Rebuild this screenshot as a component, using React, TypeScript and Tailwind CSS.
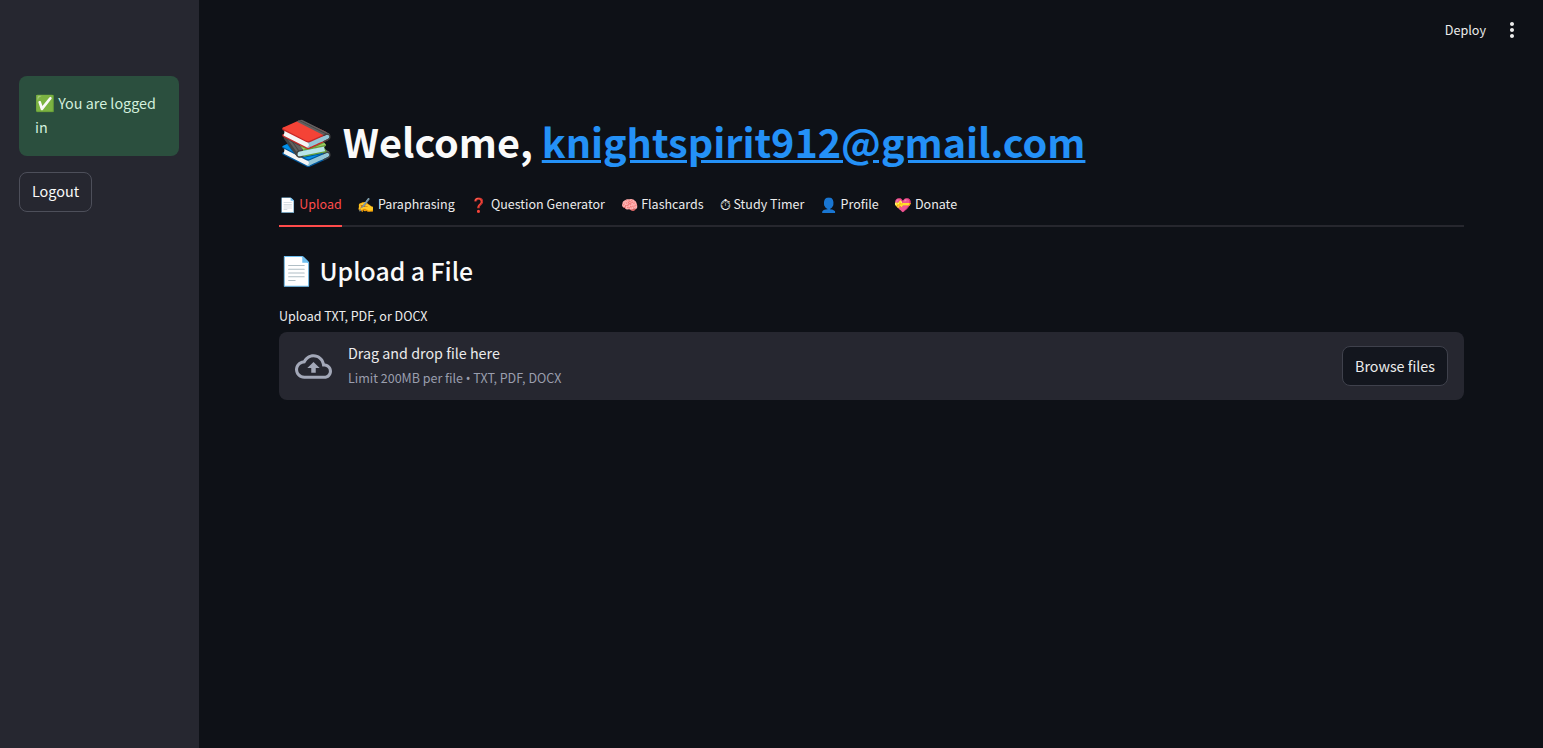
const tabs = [
  ["📄", "Upload"],
  ["✍️", "Paraphrasing"],
  ["❓", "Question Generator"],
  ["🧠", "Flashcards"],
  ["⏱\uFE0E", "Study Timer"],
  ["👤", "Profile"],
  ["💝", "Donate"],
];

export default function App() {
  return (
    <div className="flex h-[748px] overflow-hidden bg-[#0e1117] text-[#fafafa] font-['Noto_Sans_CJK_SC','DejaVu_Sans','Noto_Color_Emoji',sans-serif]">
      <aside className="w-[199px] shrink-0 bg-[#262730] pl-[19px] pr-[20px] pt-[76px]">
        <div className="h-[80px] rounded-lg bg-[#2b4f3e] px-4 pt-[14px] text-[14.35px] leading-6 text-[#d3f0dd]">
          <span className="text-base">✅</span> You are logged in
        </div>
        <button className="mt-4 h-10 w-[73px] rounded-lg border border-[#4d4f5a] pb-[2px] text-[14.4px] text-[#fafafa]">Logout</button>
      </aside>
      <main className="flex min-w-0 flex-1 flex-col">
        <header className="flex h-[60px] items-center justify-end pr-[19px] text-[12.6px] text-[#ececec]">
          <span>Deploy</span>
          <svg className="ml-[14px]" width="24" height="24" viewBox="0 0 24 24" fill="currentColor">
            <path d="M12 8c1.1 0 2-.9 2-2s-.9-2-2-2-2 .9-2 2 .9 2 2 2zm0 2c-1.1 0-2 .9-2 2s.9 2 2 2 2-.9 2-2-.9-2-2-2zm0 6c-1.1 0-2 .9-2 2s.9 2 2 2 2-.9 2-2-.9-2-2-2z" />
          </svg>
        </header>
        <div className="ml-[80px] mr-[79px] pt-[53px]">
          <h1 className="text-[39.55px] font-bold leading-[53px] whitespace-nowrap">
            <span className="text-[44px]">📚</span> Welcome, <a className="text-[#2491f7] underline">knightspirit912@gmail.com</a>
          </h1>
          <nav className="mt-[14px] flex gap-4 border-b-2 border-[#26272e] text-[12.5px] text-[#ececec]">
            {tabs.map(([icon, label], i) => (
              <div key={label} className={"-mb-[2px] flex h-[46px] items-center border-b-2 pt-[2px] " + (i === 0 ? "border-[#ff4b4b] text-[#ff4b4b]" : "border-transparent")}>
                <span className={"text-sm " + (i === 0 ? "text-white" : "")}>{icon}</span>&nbsp;{label}
              </div>
            ))}
          </nav>
          <h2 className="mt-[20px] text-[24.75px] font-medium leading-[44px]">
            <span className="text-[28px]">📄</span> Upload a File
          </h2>
          <label className="mt-[14px] block text-[12.5px] leading-5 text-[#ececec]">Upload TXT, PDF, or DOCX</label>
          <section className="mt-[6px] flex h-[68px] items-center rounded-lg bg-[#262730] pl-4 pr-4">
            <svg width="37" height="37" viewBox="0 0 24 24" fill="#a3a8b8">
              <path d="M19.35 10.04C18.67 6.59 15.64 4 12 4 9.11 4 6.6 5.64 5.35 8.04 2.34 8.36 0 10.91 0 14c0 3.31 2.69 6 6 6h13c2.76 0 5-2.24 5-5 0-2.64-2.05-4.78-4.65-4.96zM19 18H6c-2.21 0-4-1.79-4-4 0-2.05 1.53-3.76 3.56-3.97l1.07-.11.5-.95C8.08 7.14 9.94 6 12 6c2.62 0 4.88 1.86 5.39 4.43l.3 1.5 1.53.11c1.56.1 2.78 1.41 2.78 2.96 0 1.65-1.35 3-3 3zM8 13h2.55v3h2.9v-3H16l-4-4z" />
            </svg>
            <div className="ml-4 flex-1 pb-[2px]">
              <div className="text-[14.3px] leading-6 text-[#ececec]">Drag and drop file here</div>
              <div className="mt-[3px] text-[12.5px] leading-5 text-[#9a9ead]">
                Limit 200MB per file <span className="font-['Noto_Sans']">•</span> TXT, PDF, DOCX
              </div>
            </div>
            <button className="h-10 w-[106px] rounded-lg border border-[#3f414c] bg-[#13161e] text-[14.3px] text-[#ececec]">Browse files</button>
          </section>
        </div>
      </main>
    </div>
  );
}
